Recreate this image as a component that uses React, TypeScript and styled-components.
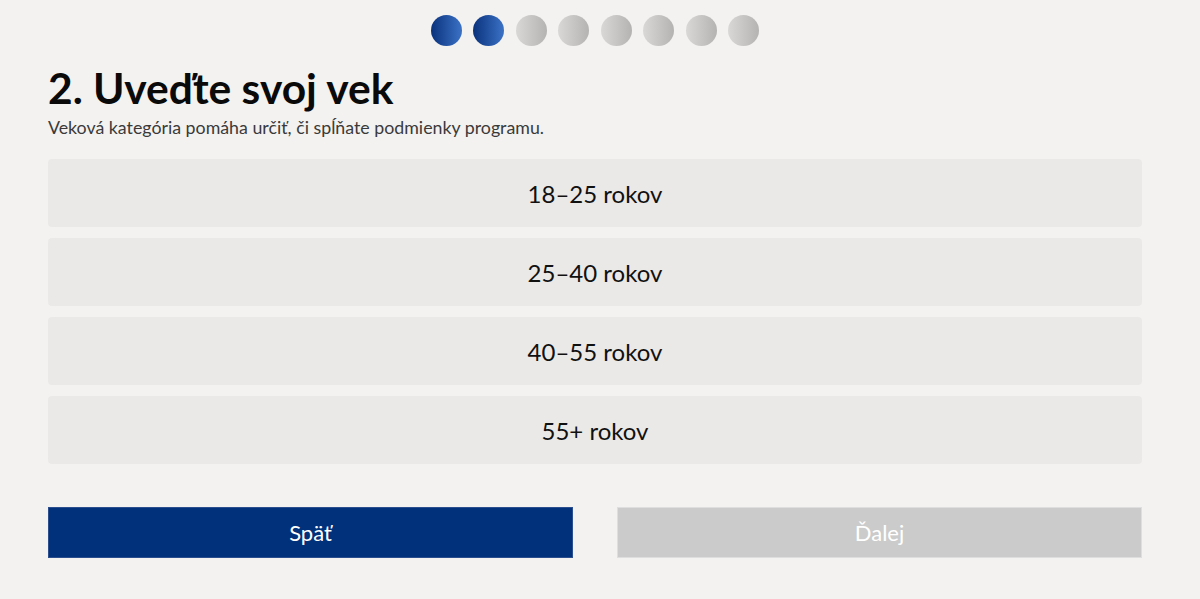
import React, { useState } from 'react';
import styled, { createGlobalStyle } from 'styled-components';

const GlobalStyle = createGlobalStyle`
  html, body {
    margin: 0;
    background: #f3f2f0;
  }
  body {
    font-family: Lato, 'Liberation Sans', sans-serif;
    color: #111;
  }
`;

const Page = styled.div`
  padding: 15px 58px 0 48px;
`;

const Steps = styled.div`
  display: flex;
  justify-content: center;
  gap: 11.5px;
`;

const Dot = styled.span<{ $done: boolean }>`
  width: 31px;
  height: 31px;
  border-radius: 50%;
  background: ${(p) =>
    p.$done
      ? 'linear-gradient(90deg, #0a327c 0%, #3b72c6 100%)'
      : 'linear-gradient(90deg, #d9d8d7 0%, #b4b3b2 100%)'};
`;

const Title = styled.h1`
  margin: 18px 0 0;
  font-size: 42.5px;
  line-height: 48px;
  font-weight: 700;
  color: #0a0a0a;
`;

const Subtitle = styled.p`
  margin: 4px 0 0;
  font-size: 17.8px;
  line-height: 22px;
  color: #3a3a3a;
`;

const Options = styled.div`
  display: flex;
  flex-direction: column;
  gap: 11px;
  margin-top: 21px;
`;

const Option = styled.button<{ $selected: boolean }>`
  height: 68px;
  border: none;
  border-radius: 4px;
  background: ${(p) => (p.$selected ? '#dcdad7' : '#ebe9e7')};
  font-family: inherit;
  font-size: 24px;
  color: #111;
  cursor: pointer;
`;

const Actions = styled.div`
  display: grid;
  grid-template-columns: 1fr 1fr;
  gap: 44px;
  margin-top: 43px;
`;

const NavButton = styled.button<{ $primary?: boolean }>`
  height: 51px;
  border: 1px solid ${(p) => (p.$primary ? '#2a4e8e' : '#dedede')};
  background: ${(p) => (p.$primary ? '#00317a' : '#cbcbcb')};
  color: #fff;
  font-family: inherit;
  font-size: 22px;
  cursor: ${(p) => (p.$primary ? 'pointer' : 'default')};
`;

const ranges = ['18–25 rokov', '25–40 rokov', '40–55 rokov', '55+ rokov'];

const App: React.FC = () => {
  const [selected, setSelected] = useState<number | null>(null);
  const step = 2;

  return (
    <>
      <GlobalStyle />
      <Page>
        <Steps>
          {Array.from({ length: 8 }, (_, i) => (
            <Dot key={i} $done={i < step} />
          ))}
        </Steps>
        <Title>2. Uveďte svoj vek</Title>
        <Subtitle>Veková kategória pomáha určiť, či spĺňate podmienky programu.</Subtitle>
        <Options>
          {ranges.map((r, i) => (
            <Option key={r} $selected={selected === i} onClick={() => setSelected(i)}>
              {r}
            </Option>
          ))}
        </Options>
        <Actions>
          <NavButton $primary>Späť</NavButton>
          <NavButton disabled={selected === null}>Ďalej</NavButton>
        </Actions>
      </Page>
    </>
  );
};

export default App;
